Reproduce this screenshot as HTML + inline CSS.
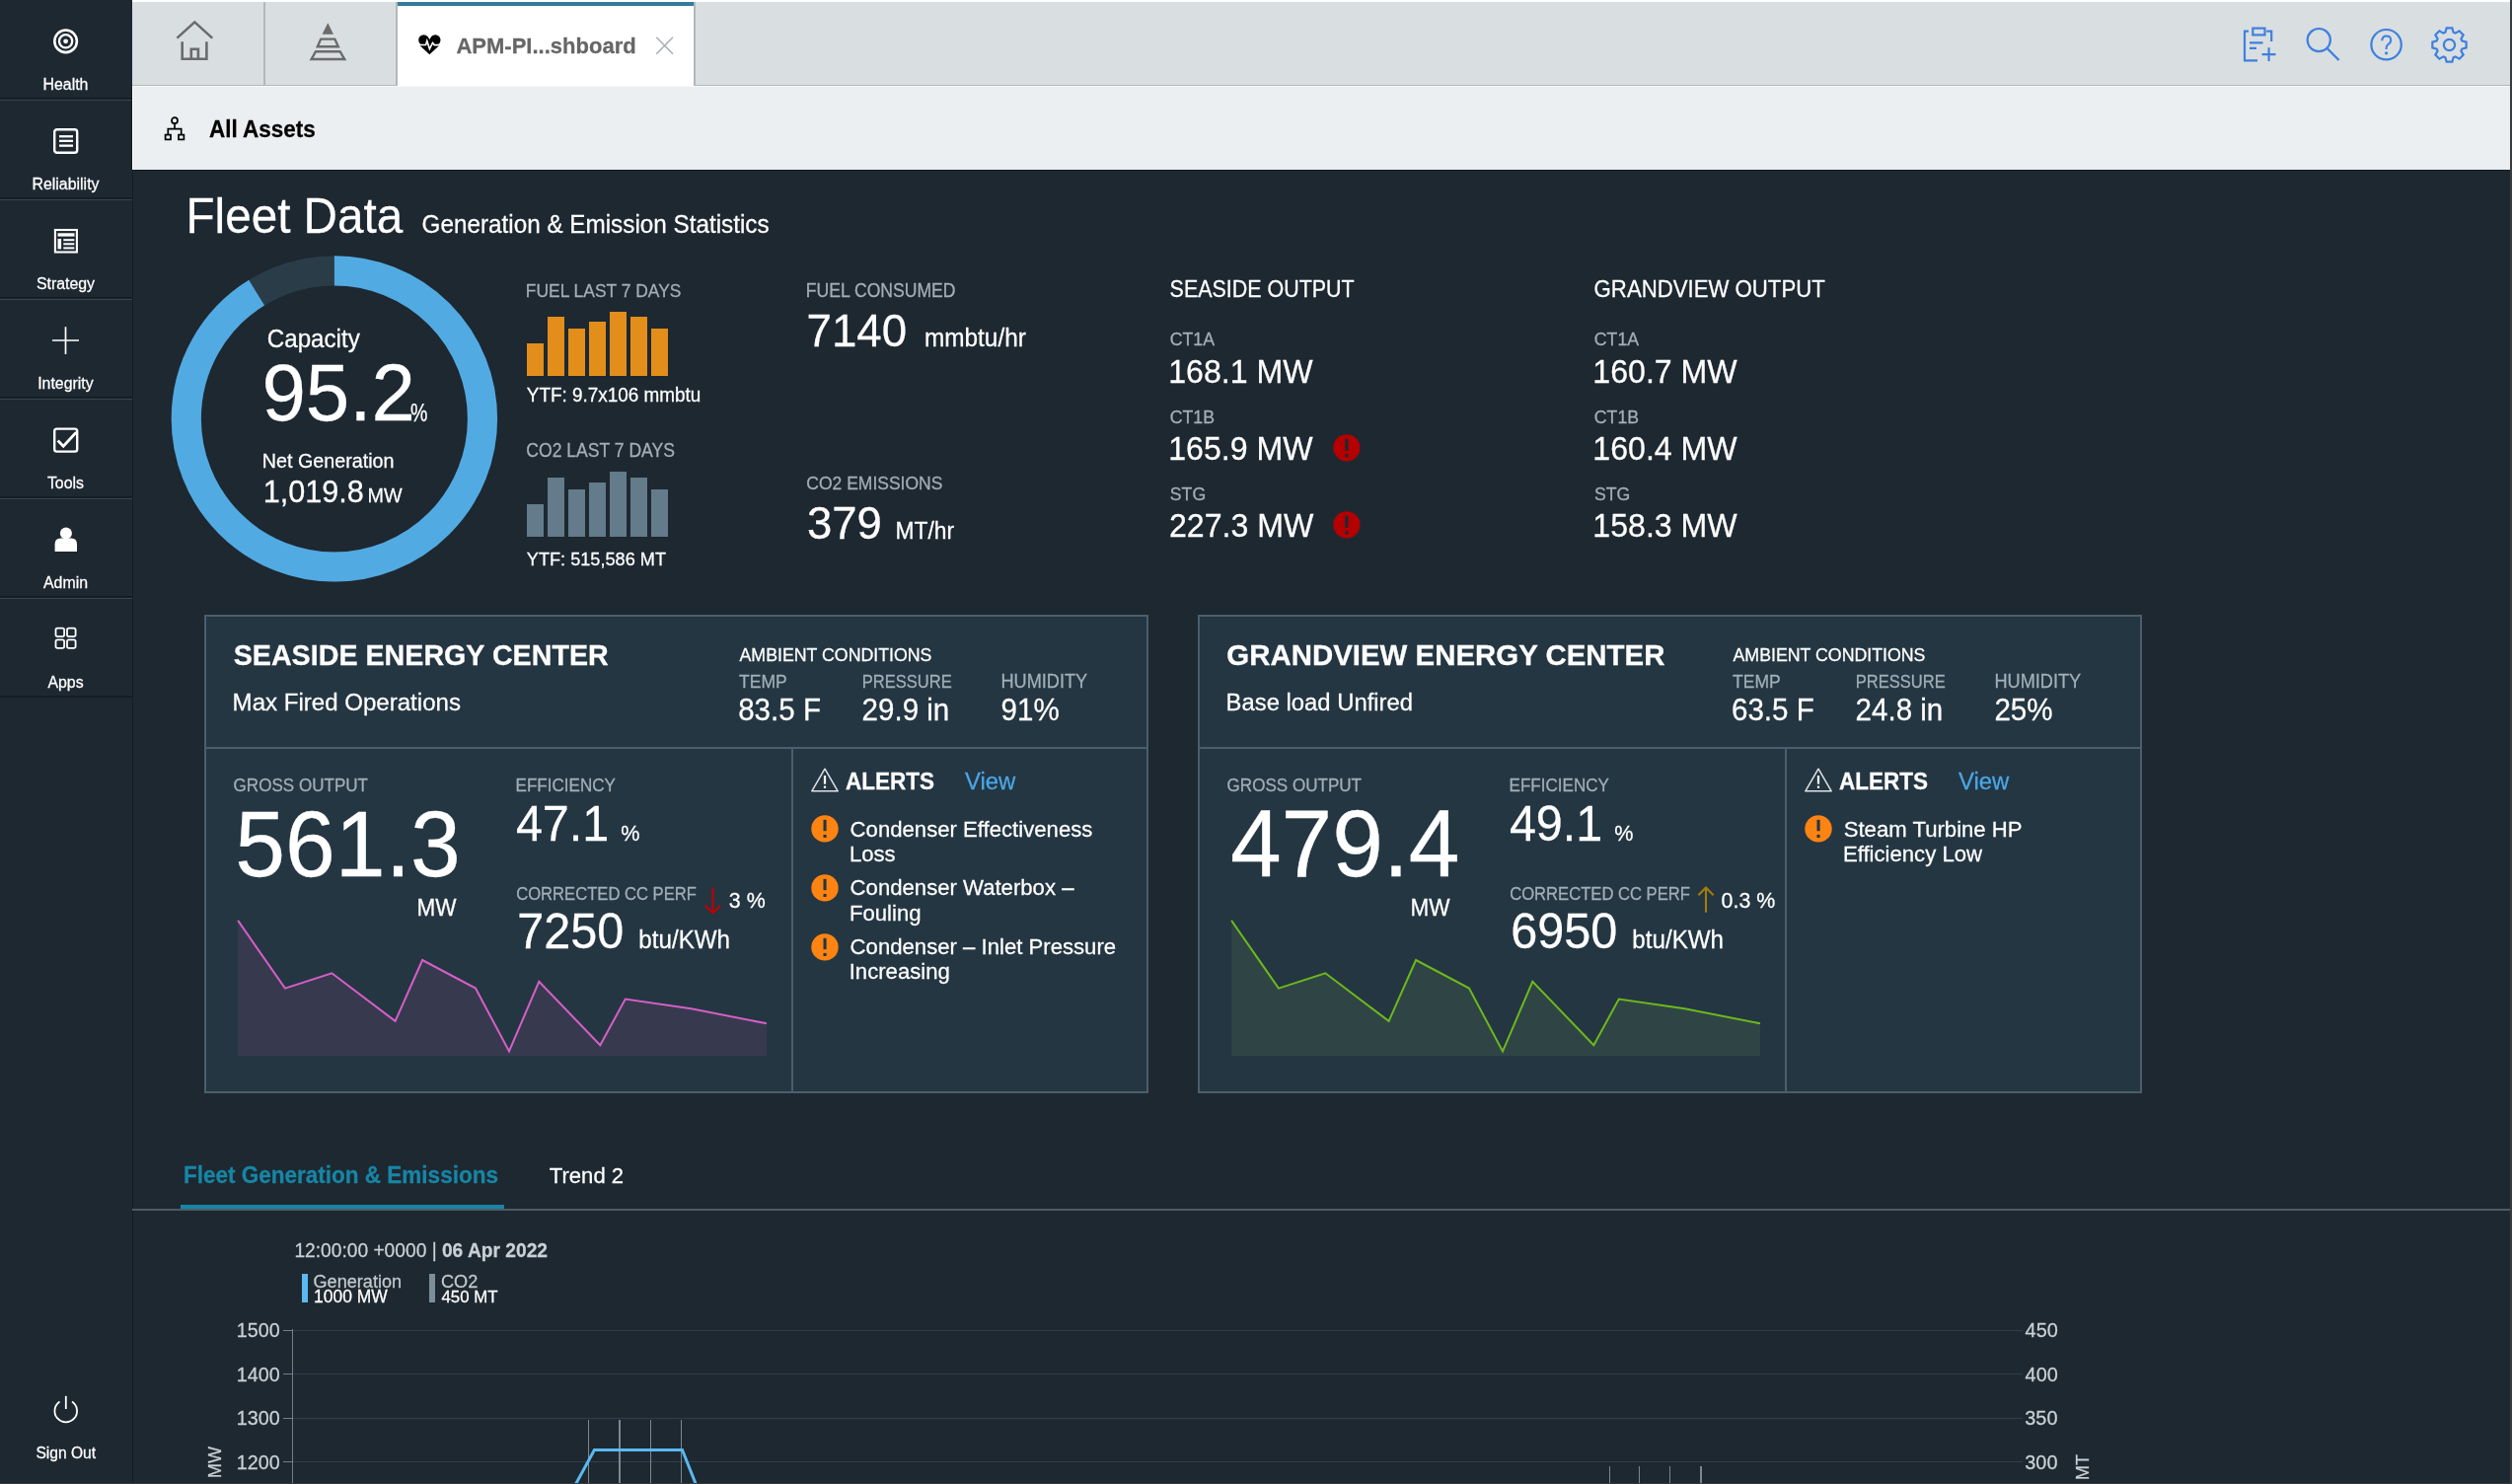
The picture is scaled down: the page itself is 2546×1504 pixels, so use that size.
<!DOCTYPE html>
<html><head><meta charset="utf-8"><title>APM Fleet Dashboard</title>
<style>
html,body{margin:0;padding:0;}
body{width:2546px;height:1504px;overflow:hidden;position:relative;background:#1e2831;font-family:"Liberation Sans",sans-serif;}
.t{position:absolute;white-space:nowrap;line-height:1;-webkit-text-stroke:0.25px currentColor;}
.r{position:absolute;}
.s{position:absolute;overflow:visible;}
b{font-weight:700;}
#root{position:absolute;left:0;top:0;width:2546px;height:1504px;overflow:hidden;will-change:transform;background:#1e2831;}
</style></head><body><div id="root">
<div class="r" style="left:0px;top:0px;width:134px;height:1504px;background:#1e2831;"></div>
<div class="r" style="left:134px;top:0px;width:1px;height:1504px;background:#151d24;"></div>
<div class="r" style="left:0px;top:99px;width:134px;height:1px;background:#141c23;"></div>
<div class="r" style="left:0px;top:100px;width:134px;height:1px;background:#192229;"></div>
<div class="r" style="left:0px;top:101px;width:134px;height:1px;background:#37444e;"></div>
<div class="r" style="left:0px;top:200px;width:134px;height:1px;background:#141c23;"></div>
<div class="r" style="left:0px;top:201px;width:134px;height:1px;background:#192229;"></div>
<div class="r" style="left:0px;top:202px;width:134px;height:1px;background:#37444e;"></div>
<div class="r" style="left:0px;top:301px;width:134px;height:1px;background:#141c23;"></div>
<div class="r" style="left:0px;top:302px;width:134px;height:1px;background:#192229;"></div>
<div class="r" style="left:0px;top:303px;width:134px;height:1px;background:#37444e;"></div>
<div class="r" style="left:0px;top:402px;width:134px;height:1px;background:#141c23;"></div>
<div class="r" style="left:0px;top:403px;width:134px;height:1px;background:#192229;"></div>
<div class="r" style="left:0px;top:404px;width:134px;height:1px;background:#37444e;"></div>
<div class="r" style="left:0px;top:503px;width:134px;height:1px;background:#141c23;"></div>
<div class="r" style="left:0px;top:504px;width:134px;height:1px;background:#192229;"></div>
<div class="r" style="left:0px;top:505px;width:134px;height:1px;background:#37444e;"></div>
<div class="r" style="left:0px;top:604px;width:134px;height:1px;background:#141c23;"></div>
<div class="r" style="left:0px;top:605px;width:134px;height:1px;background:#192229;"></div>
<div class="r" style="left:0px;top:606px;width:134px;height:1px;background:#37444e;"></div>
<div class="r" style="left:0px;top:705px;width:134px;height:1px;background:#141c23;"></div>
<div class="r" style="left:0px;top:706px;width:134px;height:1px;background:#161e25;"></div>
<div class="t" style="left:43.5px;top:78.34px;font-size:15.90px;color:#ffffff;transform:scale(1.0,1.03);transform-origin:0 13.46px;">Health</div>
<div class="t" style="left:32.5px;top:179.34px;font-size:15.90px;color:#ffffff;transform:scale(1.0,1.03);transform-origin:0 13.46px;">Reliability</div>
<div class="t" style="left:36.9px;top:280.34px;font-size:15.90px;color:#ffffff;transform:scale(1.0,1.03);transform-origin:0 13.46px;">Strategy</div>
<div class="t" style="left:38.2px;top:381.34px;font-size:15.90px;color:#ffffff;transform:scale(1.0,1.03);transform-origin:0 13.46px;">Integrity</div>
<div class="t" style="left:47.9px;top:482.34px;font-size:15.90px;color:#ffffff;transform:scale(1.0,1.03);transform-origin:0 13.46px;">Tools</div>
<div class="t" style="left:44.0px;top:583.34px;font-size:15.90px;color:#ffffff;transform:scale(1.0,1.03);transform-origin:0 13.46px;">Admin</div>
<div class="t" style="left:48.4px;top:684.34px;font-size:15.90px;color:#ffffff;transform:scale(1.0,1.03);transform-origin:0 13.46px;">Apps</div>
<svg class="s" style="left:50px;top:25px" width="34" height="34" viewBox="0 0 34 34"><circle cx="16.6" cy="16.8" r="11.3" fill="none" stroke="#fff" stroke-width="2.6"/><circle cx="16.6" cy="16.8" r="6.6" fill="none" stroke="#fff" stroke-width="2.3"/><circle cx="16.6" cy="16.8" r="2.4" fill="#fff"/></svg>
<svg class="s" style="left:50px;top:126.30000000000001px" width="34" height="34" viewBox="0 0 34 34"><rect x="5.2" y="5.2" width="23" height="23.6" rx="2.6" fill="none" stroke="#fff" stroke-width="2.4"/><rect x="10" y="11.1" width="14" height="2.3" fill="#fff"/><rect x="10" y="15.7" width="14" height="2.3" fill="#fff"/><rect x="10" y="20.5" width="14" height="2.3" fill="#fff"/></svg>
<svg class="s" style="left:50px;top:227.6px" width="34" height="34" viewBox="0 0 34 34"><rect x="5.9" y="5.0" width="22" height="22.5" fill="none" stroke="#fff" stroke-width="2.1"/><rect x="8.5" y="8.3" width="17" height="3.3" fill="#fff"/><rect x="8.5" y="14.0" width="3.6" height="10.4" fill="#fff"/><rect x="14.3" y="14.2" width="11" height="2" fill="#fff"/><rect x="14.3" y="18.3" width="11" height="2" fill="#fff"/><rect x="14.3" y="22.4" width="11" height="2" fill="#fff"/></svg>
<svg class="s" style="left:50px;top:328px" width="34" height="34" viewBox="0 0 34 34"><path d="M3 17 H30 M16.5 3.2 V31" stroke="#fff" stroke-width="1.7" fill="none"/></svg>
<svg class="s" style="left:50px;top:429px" width="34" height="34" viewBox="0 0 34 34"><rect x="5.2" y="5.6" width="23" height="23" rx="2.4" fill="none" stroke="#fff" stroke-width="2.4"/><path d="M8.6 17.6 L14.2 23.3 L27.2 9.3" stroke="#fff" stroke-width="2.8" fill="none"/></svg>
<svg class="s" style="left:50px;top:529px" width="34" height="34" viewBox="0 0 34 34"><circle cx="16.9" cy="11.5" r="6" fill="#fff"/><path d="M5.6 30 V22.5 Q5.6 16.5 11.5 16.5 H22.3 Q28 16.5 28 22.5 V30 Z" fill="#fff"/></svg>
<svg class="s" style="left:50px;top:631px" width="34" height="34" viewBox="0 0 34 34"><rect x="6.5" y="5.7" width="8.6" height="8.4" rx="1.8" fill="none" stroke="#fff" stroke-width="1.8"/><rect x="18" y="5.7" width="8.6" height="8.4" rx="1.8" fill="none" stroke="#fff" stroke-width="1.8"/><rect x="6.5" y="17.4" width="8.6" height="8.4" rx="1.8" fill="none" stroke="#fff" stroke-width="1.8"/><rect x="18" y="17.4" width="8.6" height="8.4" rx="1.8" fill="none" stroke="#fff" stroke-width="1.8"/></svg>
<svg class="s" style="left:50px;top:1412px" width="34" height="34" viewBox="0 0 34 34"><path d="M10.5 8.6 A11.3 11.3 0 1 0 23 8.6" stroke="#fff" stroke-width="1.8" fill="none"/><path d="M16.8 2.8 V16" stroke="#fff" stroke-width="1.8" fill="none"/></svg>
<div class="t" style="left:36.4px;top:1464.59px;font-size:15.60px;color:#ffffff;transform:scale(1.0,1.03);transform-origin:0 13.21px;">Sign Out</div>
<div class="r" style="left:134px;top:0px;width:2412px;height:2px;background:#ffffff;"></div>
<div class="r" style="left:134px;top:2px;width:2410px;height:84px;background:#d9dee1;"></div>
<div class="r" style="left:134px;top:86px;width:2410px;height:1px;background:#b6b5ba;"></div>
<div class="r" style="left:267px;top:2px;width:2px;height:84px;background:#b2b7ba;"></div>
<div class="r" style="left:401px;top:2px;width:2px;height:84px;background:#b2b7ba;"></div>
<div class="r" style="left:403px;top:2px;width:300px;height:86px;background:#ffffff;"></div>
<div class="r" style="left:403px;top:2px;width:300px;height:4px;background:#337b9a;"></div>
<div class="r" style="left:703px;top:2px;width:2px;height:84px;background:#b2b7ba;"></div>
<svg class="s" style="left:176px;top:18px;" width="44" height="46" viewBox="0 0 44 46"><path d="M3.4 20.6 L21.3 4.4 L39.2 20.6" stroke="#6b6b6b" stroke-width="2.6" fill="none"/><path d="M8.7 24.2 V41.8 H33.4 V24.2" stroke="#6b6b6b" stroke-width="2.6" fill="none"/><path d="M17.8 41.8 V31.8 H24.9 V41.8" stroke="#6b6b6b" stroke-width="2.6" fill="none"/></svg>
<svg class="s" style="left:313px;top:20px;" width="44" height="44" viewBox="0 0 44 44"><path d="M19.3 3.2 L25 14.8 H13.6 Z" fill="#6b6b6b"/><path d="M12.2 19.6 H26.4 L29.8 27.2 H8.8 Z" stroke="#6b6b6b" stroke-width="2.4" fill="none"/><path d="M7 32.2 H31.6 L36.2 40 H2.6 Z" stroke="#6b6b6b" stroke-width="2.4" fill="none"/></svg>
<svg class="s" style="left:422px;top:33px;" width="28" height="26" viewBox="0 0 28 26"><circle cx="7.5" cy="7.5" r="5.3" fill="#000"/><circle cx="19.2" cy="7.5" r="5.3" fill="#000"/><path d="M9 3.2 L13.35 6.8 L17.7 3.2 L18 12.8 L9 12.8 Z" fill="#000"/><path d="M2.6 12.2 H24.1 L13.35 22.2 Z" fill="#000"/><path d="M1 12.5 H9.6 L10.8 8.5 L13.4 16.6 L16.5 10.4 L18.3 12.6 H26" stroke="#fff" stroke-width="1.6" fill="none" stroke-linejoin="miter"/></svg>
<div class="t" style="left:462.4px;top:35.85px;font-size:22.02px;color:#666666;font-weight:700;transform:scale(1.0,1.03);transform-origin:0 18.65px;">APM-PI...shboard</div>
<svg class="s" style="left:662px;top:35px;" width="24" height="24" viewBox="0 0 24 24"><path d="M3.3 2.8 L20 19.8 M20 2.8 L3.3 19.8" stroke="#a9b0b3" stroke-width="1.6" fill="none"/></svg>
<svg class="s" style="left:2270px;top:24px;" width="42" height="42" viewBox="0 0 42 42"><path d="M9 7.6 H5 V37.4 H18" stroke="#3f80de" stroke-width="2.2" fill="none"/><rect x="13.3" y="4.6" width="12.2" height="6.8" stroke="#3f80de" stroke-width="2.2" fill="none"/><path d="M27.2 7.6 H32.2 V18" stroke="#3f80de" stroke-width="2.2" fill="none"/><path d="M10 19.3 H23.5 M10 24.8 H17" stroke="#3f80de" stroke-width="2.2" fill="none"/><path d="M29.6 24.2 V38 M22.6 31.1 H36.5" stroke="#3f80de" stroke-width="2.2" fill="none"/></svg>
<svg class="s" style="left:2334px;top:24px;" width="42" height="42" viewBox="0 0 42 42"><circle cx="16.3" cy="16.6" r="11.6" stroke="#3f80de" stroke-width="2.2" fill="none"/><path d="M24.6 25 L36.6 37" stroke="#3f80de" stroke-width="2.4" fill="none"/></svg>
<svg class="s" style="left:2398px;top:24px;" width="42" height="42" viewBox="0 0 42 42"><circle cx="20.6" cy="21.2" r="15.2" stroke="#3f80de" stroke-width="2.2" fill="none"/><path d="M16.3 17.2 Q16.3 12.4 20.8 12.4 Q25.2 12.4 25.2 16.6 Q25.2 19.4 22.6 20.8 Q20.6 22 20.6 24.8 V26" stroke="#3f80de" stroke-width="2" fill="none"/><circle cx="20.6" cy="29.8" r="1.6" fill="#3f80de"/></svg>
<svg class="s" style="left:2461px;top:24px;" width="43" height="43" viewBox="0 0 43 43"><path d="M17.41 8.74 L18.64 4.34 L24.36 4.34 L25.59 8.74 L27.63 9.59 L31.62 7.34 L35.66 11.38 L33.41 15.37 L34.26 17.41 L38.66 18.64 L38.66 24.36 L34.26 25.59 L33.41 27.63 L35.66 31.62 L31.62 35.66 L27.63 33.41 L25.59 34.26 L24.36 38.66 L18.64 38.66 L17.41 34.26 L15.37 33.41 L11.38 35.66 L7.34 31.62 L9.59 27.63 L8.74 25.59 L4.34 24.36 L4.34 18.64 L8.74 17.41 L9.59 15.37 L7.34 11.38 L11.38 7.34 L15.37 9.59 Z" stroke="#3f80de" stroke-width="2.2" fill="none" stroke-linejoin="miter"/><circle cx="21.5" cy="21.5" r="5.6" stroke="#3f80de" stroke-width="2.2" fill="none"/></svg>
<div class="r" style="left:134px;top:87px;width:2410px;height:85px;background:#eceff1;"></div>
<div class="r" style="left:134px;top:87px;width:2410px;height:1px;background:#f6f8f9;"></div>
<div class="r" style="left:133px;top:87px;width:1px;height:85px;background:#131b22;"></div>
<div class="r" style="left:134px;top:87px;width:1px;height:85px;background:#ffffff;"></div>
<div class="r" style="left:134px;top:172px;width:2410px;height:1px;background:#151d24;"></div>
<svg class="s" style="left:164px;top:116px;" width="28" height="30" viewBox="0 0 28 30"><circle cx="13" cy="6.2" r="3" stroke="#000" stroke-width="1.7" fill="none"/><path d="M13 9.2 V14.6 M6.3 20.5 V14.6 H19.7 V20.5" stroke="#000" stroke-width="1.7" fill="none"/><rect x="3.6" y="20.6" width="5.4" height="4.8" stroke="#000" stroke-width="1.7" fill="none"/><rect x="17" y="20.6" width="5.4" height="4.8" stroke="#000" stroke-width="1.7" fill="none"/></svg>
<div class="t" style="left:211.9px;top:121.16px;font-size:22.49px;color:#000000;font-weight:700;transform:scale(1.0,1.03);transform-origin:0 19.04px;">All Assets</div>
<div class="r" style="left:2544px;top:0px;width:2px;height:1504px;background:#3a3d40;"></div>
<div class="t" style="left:188.5px;top:196.27px;font-size:47.63px;color:#ffffff;transform:scale(1.0,1.03);transform-origin:0 40.33px;">Fleet Data</div>
<div class="t" style="left:427.6px;top:216.05px;font-size:24.27px;color:#ffffff;transform:scale(1.0,1.03);transform-origin:0 20.55px;">Generation &amp; Emission Statistics</div>
<svg class="s" style="left:160px;top:246px;" width="360" height="360" viewBox="0 0 360 360"><circle cx="178.89999999999998" cy="178.39999999999998" r="150.1" fill="none" stroke="#2b3c49" stroke-width="30.2"/><circle cx="178.89999999999998" cy="178.39999999999998" r="150.1" fill="none" stroke="#52aae3" stroke-width="30.2" stroke-dasharray="859.80 83.31" transform="rotate(-90 178.89999999999998 178.39999999999998)"/></svg>
<div class="t" style="left:270.8px;top:331.54px;font-size:24.17px;color:#ffffff;transform:scale(1.0,1.03);transform-origin:0 20.46px;">Capacity</div>
<div class="t" style="left:265.4px;top:359.36px;font-size:79.89px;color:#ffffff;transform:scale(1.0,1.03);transform-origin:0 67.64px;">95.2</div>
<div class="t" style="left:416.1px;top:405.83px;font-size:25.00px;color:#ffffff;transform:scaleX(0.78);transform-origin:0 0;">%</div>
<div class="t" style="left:265.7px;top:457.89px;font-size:19.74px;color:#ffffff;transform:scale(1.0,1.03);transform-origin:0 16.71px;">Net Generation</div>
<div class="t" style="left:266.7px;top:483.07px;font-size:30.62px;color:#ffffff;transform:scale(1.0,1.03);transform-origin:0 25.93px;">1,019.8</div>
<div class="t" style="left:372.6px;top:493.27px;font-size:19.76px;color:#ffffff;transform:scale(1.0,1.03);transform-origin:0 16.73px;">MW</div>
<div class="t" style="left:532.8px;top:286.54px;font-size:17.44px;color:#a3afb7;transform:scale(1.0,1.1);transform-origin:0 14.76px;">FUEL LAST 7 DAYS</div>
<div class="r" style="left:534.2px;top:348.4px;width:16.7px;height:32.4px;background:#e38e1b;"></div>
<div class="r" style="left:534.2px;top:510.7px;width:16.7px;height:33.1px;background:#637b8a;"></div>
<div class="r" style="left:555.2px;top:321.2px;width:16.7px;height:59.6px;background:#e38e1b;"></div>
<div class="r" style="left:555.2px;top:483.6px;width:16.7px;height:60.2px;background:#637b8a;"></div>
<div class="r" style="left:576.1px;top:332.7px;width:16.7px;height:48.1px;background:#e38e1b;"></div>
<div class="r" style="left:576.1px;top:495.7px;width:16.7px;height:48.1px;background:#637b8a;"></div>
<div class="r" style="left:597.1px;top:326.4px;width:16.7px;height:54.4px;background:#e38e1b;"></div>
<div class="r" style="left:597.1px;top:488.8px;width:16.7px;height:55.0px;background:#637b8a;"></div>
<div class="r" style="left:618.0px;top:315.6px;width:16.7px;height:65.2px;background:#e38e1b;"></div>
<div class="r" style="left:618.0px;top:477.9px;width:16.7px;height:65.9px;background:#637b8a;"></div>
<div class="r" style="left:639.0px;top:321.2px;width:16.7px;height:59.6px;background:#e38e1b;"></div>
<div class="r" style="left:639.0px;top:483.6px;width:16.7px;height:60.2px;background:#637b8a;"></div>
<div class="r" style="left:659.9px;top:332.7px;width:16.7px;height:48.1px;background:#e38e1b;"></div>
<div class="r" style="left:659.9px;top:495.7px;width:16.7px;height:48.1px;background:#637b8a;"></div>
<div class="t" style="left:533.8px;top:391.88px;font-size:18.92px;color:#ffffff;transform:scale(1.0,1.03);transform-origin:0 16.02px;">YTF: 9.7x106 mmbtu</div>
<div class="t" style="left:533.3px;top:448.83px;font-size:17.57px;color:#a3afb7;transform:scale(1.0,1.1);transform-origin:0 14.87px;">CO2 LAST 7 DAYS</div>
<div class="t" style="left:533.8px;top:558.22px;font-size:18.17px;color:#ffffff;transform:scale(1.0,1.03);transform-origin:0 15.38px;">YTF: 515,586 MT</div>
<div class="t" style="left:816.8px;top:287.40px;font-size:17.59px;color:#a3afb7;transform:scale(1.0,1.1);transform-origin:0 14.90px;">FUEL CONSUMED</div>
<div class="t" style="left:817.5px;top:312.63px;font-size:45.67px;color:#ffffff;transform:scale(1.0,1.03);transform-origin:0 38.67px;">7140</div>
<div class="t" style="left:936.9px;top:330.66px;font-size:24.38px;color:#ffffff;transform:scale(1.0,1.03);transform-origin:0 20.64px;">mmbtu/hr</div>
<div class="t" style="left:817.3px;top:481.58px;font-size:17.51px;color:#a3afb7;transform:scale(1.0,1.1);transform-origin:0 14.82px;">CO2 EMISSIONS</div>
<div class="t" style="left:818.1px;top:507.54px;font-size:45.43px;color:#ffffff;transform:scale(1.0,1.03);transform-origin:0 38.46px;">379</div>
<div class="t" style="left:907.4px;top:526.61px;font-size:22.90px;color:#ffffff;transform:scale(1.0,1.03);transform-origin:0 19.39px;">MT/hr</div>
<div class="t" style="left:1185.6px;top:284.14px;font-size:21.45px;color:#ffffff;transform:scale(1.0,1.1);transform-origin:0 18.16px;">SEASIDE OUTPUT</div>
<div class="t" style="left:1185.7px;top:336.49px;font-size:17.72px;color:#a3afb7;transform:scale(1.0,1.03);transform-origin:0 15.01px;">CT1A</div>
<div class="t" style="left:1184.2px;top:361.38px;font-size:32.14px;color:#ffffff;transform:scale(1.0,1.03);transform-origin:0 27.22px;">168.1 MW</div>
<div class="t" style="left:1185.7px;top:414.69px;font-size:17.72px;color:#a3afb7;transform:scale(1.0,1.03);transform-origin:0 15.01px;">CT1B</div>
<div class="t" style="left:1184.2px;top:438.58px;font-size:32.14px;color:#ffffff;transform:scale(1.0,1.03);transform-origin:0 27.22px;">165.9 MW</div>
<svg class="s" style="left:1350.8px;top:439.8px;" width="28" height="28" viewBox="0 0 28 28"><circle cx="13.9" cy="13.8" r="13.6" fill="#b40000"/><rect x="12.3" y="4.6" width="3.2" height="12.2" fill="#1e2831"/><rect x="12.3" y="20.1" width="3.2" height="3.3" fill="#1e2831"/></svg>
<div class="t" style="left:1185.8px;top:492.89px;font-size:17.72px;color:#a3afb7;transform:scale(1.0,1.03);transform-origin:0 15.01px;">STG</div>
<div class="t" style="left:1185.0px;top:516.78px;font-size:32.14px;color:#ffffff;transform:scale(1.0,1.03);transform-origin:0 27.22px;">227.3 MW</div>
<svg class="s" style="left:1350.8px;top:518px;" width="28" height="28" viewBox="0 0 28 28"><circle cx="13.9" cy="13.8" r="13.6" fill="#b40000"/><rect x="12.3" y="4.6" width="3.2" height="12.2" fill="#1e2831"/><rect x="12.3" y="20.1" width="3.2" height="3.3" fill="#1e2831"/></svg>
<div class="t" style="left:1615.6px;top:282.51px;font-size:22.19px;color:#ffffff;transform:scale(1.0,1.1);transform-origin:0 18.79px;">GRANDVIEW OUTPUT</div>
<div class="t" style="left:1615.8px;top:336.49px;font-size:17.72px;color:#a3afb7;transform:scale(1.0,1.03);transform-origin:0 15.01px;">CT1A</div>
<div class="t" style="left:1614.3px;top:361.38px;font-size:32.14px;color:#ffffff;transform:scale(1.0,1.03);transform-origin:0 27.22px;">160.7 MW</div>
<div class="t" style="left:1615.8px;top:414.69px;font-size:17.72px;color:#a3afb7;transform:scale(1.0,1.03);transform-origin:0 15.01px;">CT1B</div>
<div class="t" style="left:1614.3px;top:438.58px;font-size:32.14px;color:#ffffff;transform:scale(1.0,1.03);transform-origin:0 27.22px;">160.4 MW</div>
<div class="t" style="left:1615.9px;top:492.89px;font-size:17.72px;color:#a3afb7;transform:scale(1.0,1.03);transform-origin:0 15.01px;">STG</div>
<div class="t" style="left:1614.3px;top:516.78px;font-size:32.14px;color:#ffffff;transform:scale(1.0,1.03);transform-origin:0 27.22px;">158.3 MW</div>
<div class="r" style="left:207px;top:623px;width:957px;height:485px;background:#243642;box-sizing:border-box;border:2px solid #4b5e6b;"></div>
<div class="r" style="left:207px;top:757px;width:957px;height:2px;background:#4b5e6b;"></div>
<div class="r" style="left:802px;top:758px;width:2px;height:350px;background:#4b5e6b;"></div>
<div class="t" style="left:236.7px;top:650.33px;font-size:28.66px;color:#ffffff;font-weight:700;transform:scale(1.0,1.03);transform-origin:0 24.27px;">SEASIDE ENERGY CENTER</div>
<div class="t" style="left:235.6px;top:699.62px;font-size:24.07px;color:#ffffff;transform:scale(1.0,1.03);transform-origin:0 20.38px;">Max Fired Operations</div>
<div class="t" style="left:749.5px;top:655.56px;font-size:17.76px;color:#ffffff;transform:scale(1.0,1.06);transform-origin:0 15.04px;">AMBIENT CONDITIONS</div>
<div class="t" style="left:749.1px;top:683.06px;font-size:17.52px;color:#a3afb7;transform:scale(1.0,1.1);transform-origin:0 14.84px;">TEMP</div>
<div class="t" style="left:748.2px;top:705.48px;font-size:29.55px;color:#ffffff;transform:scale(1.0,1.03);transform-origin:0 25.02px;">83.5 F</div>
<div class="t" style="left:873.8px;top:683.89px;font-size:16.54px;color:#a3afb7;transform:scale(1.0,1.1);transform-origin:0 14.01px;">PRESSURE</div>
<div class="t" style="left:873.6px;top:705.48px;font-size:29.55px;color:#ffffff;transform:scale(1.0,1.03);transform-origin:0 25.02px;">29.9 in</div>
<div class="t" style="left:1014.4px;top:681.51px;font-size:18.18px;color:#a3afb7;transform:scale(1.0,1.1);transform-origin:0 15.39px;">HUMIDITY</div>
<div class="t" style="left:1014.6px;top:705.48px;font-size:29.55px;color:#ffffff;transform:scale(1.0,1.03);transform-origin:0 25.02px;">91%</div>
<div class="t" style="left:236.6px;top:788.05px;font-size:17.06px;color:#a3afb7;transform:scale(1.0,1.1);transform-origin:0 14.45px;">GROSS OUTPUT</div>
<div class="t" style="left:238.3px;top:811.18px;font-size:91.32px;color:#ffffff;transform:scale(1.0,1.03);transform-origin:0 77.32px;">561.3</div>
<div class="t" style="right:2083.5px;top:909.52px;font-size:22.54px;color:#ffffff;transform:scale(1.0,1.03);transform-origin:100% 19.08px;">MW</div>
<div class="t" style="left:522.6px;top:788.07px;font-size:17.05px;color:#a3afb7;transform:scale(1.0,1.1);transform-origin:0 14.43px;">EFFICIENCY</div>
<div class="t" style="left:522.9px;top:811.21px;font-size:48.53px;color:#ffffff;transform:scale(1.0,1.03);transform-origin:0 41.09px;">47.1</div>
<div class="t" style="left:629.2px;top:834.02px;font-size:21.59px;color:#ffffff;transform:scale(1.0,1.03);transform-origin:0 18.28px;">%</div>
<div class="t" style="left:523.2px;top:899.43px;font-size:16.62px;color:#a3afb7;transform:scale(1.0,1.15);transform-origin:0 14.07px;">CORRECTED CC PERF</div>
<svg class="s" style="left:713px;top:896px;" width="20" height="32" viewBox="0 0 20 32"><path d="M9.4 3.6 V29.2 M1.6 21.8 L9.4 29.4 L17.2 21.8" stroke="#c00000" stroke-width="2.1" fill="none"/></svg>
<div class="t" style="left:738.8px;top:902.66px;font-size:21.42px;color:#ffffff;transform:scale(1.0,1.03);transform-origin:0 18.14px;">3 %</div>
<div class="t" style="left:524.2px;top:919.87px;font-size:48.57px;color:#ffffff;transform:scale(1.0,1.03);transform-origin:0 41.13px;">7250</div>
<div class="t" style="left:647.3px;top:940.51px;font-size:24.20px;color:#ffffff;transform:scale(1.0,1.03);transform-origin:0 20.49px;">btu/KWh</div>
<svg class="s" style="left:238px;top:920px;" width="545" height="160" viewBox="0 0 545 160"><polygon points="3.1,150.3 3.1,12.9 50.9,81.6 98.3,66.3 162.6,114.9 190.1,53.0 244.0,81.6 278.0,145.5 308.3,74.8 370.3,139.2 395.8,92.5 462.5,102.3 539.0,117.3 539.0,150.3" fill="#373a4f"/><polyline points="3.1,12.9 50.9,81.6 98.3,66.3 162.6,114.9 190.1,53.0 244.0,81.6 278.0,145.5 308.3,74.8 370.3,139.2 395.8,92.5 462.5,102.3 539.0,117.3" fill="none" stroke="#d65fc6" stroke-width="2"/></svg>
<svg class="s" style="left:821px;top:776px;" width="32" height="30" viewBox="0 0 32 30"><path d="M15 3.2 L28.2 25.8 H1.8 Z" stroke="#dfe3e6" stroke-width="1.5" fill="none" stroke-linejoin="round"/><path d="M15 10 V18.6" stroke="#fff" stroke-width="2.2"/><rect x="13.9" y="20.6" width="2.2" height="2.2" fill="#fff"/></svg>
<div class="t" style="left:857.0px;top:781.93px;font-size:22.53px;color:#ffffff;font-weight:700;transform:scale(1.0,1.1);transform-origin:0 19.07px;">ALERTS</div>
<div class="t" style="left:977.9px;top:779.76px;font-size:23.91px;color:#4aa7e6;transform:scale(1.0,1.03);transform-origin:0 20.24px;">View</div>
<svg class="s" style="left:822.1px;top:826px;" width="28" height="28" viewBox="0 0 28 28"><circle cx="14" cy="13.9" r="13.7" fill="#fd8412"/><rect x="12.5" y="4.8" width="3.1" height="11.4" fill="#243642"/><rect x="12.5" y="19.9" width="3.1" height="3.1" fill="#243642"/></svg>
<div class="t" style="left:861.6px;top:829.84px;font-size:22.15px;color:#ffffff;transform:scale(1.0,1.03);transform-origin:0 18.76px;">Condenser Effectiveness</div>
<div class="t" style="left:860.9px;top:855.04px;font-size:22.15px;color:#ffffff;transform:scale(1.0,1.03);transform-origin:0 18.76px;">Loss</div>
<svg class="s" style="left:822.1px;top:885.5px;" width="28" height="28" viewBox="0 0 28 28"><circle cx="14" cy="13.9" r="13.7" fill="#fd8412"/><rect x="12.5" y="4.8" width="3.1" height="11.4" fill="#243642"/><rect x="12.5" y="19.9" width="3.1" height="3.1" fill="#243642"/></svg>
<div class="t" style="left:861.6px;top:888.64px;font-size:22.15px;color:#ffffff;transform:scale(1.0,1.03);transform-origin:0 18.76px;">Condenser Waterbox –</div>
<div class="t" style="left:860.9px;top:914.84px;font-size:22.15px;color:#ffffff;transform:scale(1.0,1.03);transform-origin:0 18.76px;">Fouling</div>
<svg class="s" style="left:822.1px;top:945.7px;" width="28" height="28" viewBox="0 0 28 28"><circle cx="14" cy="13.9" r="13.7" fill="#fd8412"/><rect x="12.5" y="4.8" width="3.1" height="11.4" fill="#243642"/><rect x="12.5" y="19.9" width="3.1" height="3.1" fill="#243642"/></svg>
<div class="t" style="left:861.6px;top:949.14px;font-size:22.15px;color:#ffffff;transform:scale(1.0,1.03);transform-origin:0 18.76px;">Condenser – Inlet Pressure</div>
<div class="t" style="left:860.7px;top:974.34px;font-size:22.15px;color:#ffffff;transform:scale(1.0,1.03);transform-origin:0 18.76px;">Increasing</div>
<div class="r" style="left:1214px;top:623px;width:957px;height:485px;background:#243642;box-sizing:border-box;border:2px solid #4b5e6b;"></div>
<div class="r" style="left:1214px;top:757px;width:957px;height:2px;background:#4b5e6b;"></div>
<div class="r" style="left:1809px;top:758px;width:2px;height:350px;background:#4b5e6b;"></div>
<div class="t" style="left:1243.3px;top:648.68px;font-size:29.43px;color:#ffffff;font-weight:700;transform:scale(1.0,1.03);transform-origin:0 24.92px;">GRANDVIEW ENERGY CENTER</div>
<div class="t" style="left:1242.6px;top:699.82px;font-size:23.83px;color:#ffffff;transform:scale(1.0,1.03);transform-origin:0 20.18px;">Base load Unfired</div>
<div class="t" style="left:1756.5px;top:655.56px;font-size:17.76px;color:#ffffff;transform:scale(1.0,1.06);transform-origin:0 15.04px;">AMBIENT CONDITIONS</div>
<div class="t" style="left:1756.1px;top:683.06px;font-size:17.52px;color:#a3afb7;transform:scale(1.0,1.1);transform-origin:0 14.84px;">TEMP</div>
<div class="t" style="left:1755.0px;top:705.48px;font-size:29.55px;color:#ffffff;transform:scale(1.0,1.03);transform-origin:0 25.02px;">63.5 F</div>
<div class="t" style="left:1880.8px;top:683.89px;font-size:16.54px;color:#a3afb7;transform:scale(1.0,1.1);transform-origin:0 14.01px;">PRESSURE</div>
<div class="t" style="left:1880.6px;top:705.48px;font-size:29.55px;color:#ffffff;transform:scale(1.0,1.03);transform-origin:0 25.02px;">24.8 in</div>
<div class="t" style="left:2021.4px;top:681.51px;font-size:18.18px;color:#a3afb7;transform:scale(1.0,1.1);transform-origin:0 15.39px;">HUMIDITY</div>
<div class="t" style="left:2021.4px;top:705.48px;font-size:29.55px;color:#ffffff;transform:scale(1.0,1.03);transform-origin:0 25.02px;">25%</div>
<div class="t" style="left:1243.6px;top:788.05px;font-size:17.06px;color:#a3afb7;transform:scale(1.0,1.1);transform-origin:0 14.45px;">GROSS OUTPUT</div>
<div class="t" style="left:1246.9px;top:809.79px;font-size:92.97px;color:#ffffff;transform:scale(1.0,1.03);transform-origin:0 78.71px;">479.4</div>
<div class="t" style="right:1076.5px;top:909.52px;font-size:22.54px;color:#ffffff;transform:scale(1.0,1.03);transform-origin:100% 19.08px;">MW</div>
<div class="t" style="left:1529.6px;top:788.07px;font-size:17.05px;color:#a3afb7;transform:scale(1.0,1.1);transform-origin:0 14.43px;">EFFICIENCY</div>
<div class="t" style="left:1529.9px;top:811.21px;font-size:48.53px;color:#ffffff;transform:scale(1.0,1.03);transform-origin:0 41.09px;">49.1</div>
<div class="t" style="left:1636.2px;top:834.02px;font-size:21.59px;color:#ffffff;transform:scale(1.0,1.03);transform-origin:0 18.28px;">%</div>
<div class="t" style="left:1530.2px;top:899.43px;font-size:16.62px;color:#a3afb7;transform:scale(1.0,1.15);transform-origin:0 14.07px;">CORRECTED CC PERF</div>
<svg class="s" style="left:1720px;top:896px;" width="20" height="32" viewBox="0 0 20 32"><path d="M9 28.8 V3.6 M1.4 11.2 L9 3.4 L16.6 11.2" stroke="#a17d0c" stroke-width="2.1" fill="none"/></svg>
<div class="t" style="left:1744.6px;top:902.66px;font-size:21.42px;color:#ffffff;transform:scale(1.0,1.03);transform-origin:0 18.14px;">0.3 %</div>
<div class="t" style="left:1531.2px;top:919.87px;font-size:48.57px;color:#ffffff;transform:scale(1.0,1.03);transform-origin:0 41.13px;">6950</div>
<div class="t" style="left:1654.3px;top:940.51px;font-size:24.20px;color:#ffffff;transform:scale(1.0,1.03);transform-origin:0 20.49px;">btu/KWh</div>
<svg class="s" style="left:238px;top:920px;" width="545" height="160" viewBox="0 0 545 160"><polygon points="1010.1,150.3 1010.1,12.9 1057.9,81.6 1105.3,66.3 1169.6,114.9 1197.1,53.0 1251.0,81.6 1285.0,145.5 1315.3,74.8 1377.3,139.2 1402.8,92.5 1469.5,102.3 1546.0,117.3 1546.0,150.3" fill="#2f4545"/><polyline points="1010.1,12.9 1057.9,81.6 1105.3,66.3 1169.6,114.9 1197.1,53.0 1251.0,81.6 1285.0,145.5 1315.3,74.8 1377.3,139.2 1402.8,92.5 1469.5,102.3 1546.0,117.3" fill="none" stroke="#6db81c" stroke-width="2"/></svg>
<svg class="s" style="left:1828px;top:776px;" width="32" height="30" viewBox="0 0 32 30"><path d="M15 3.2 L28.2 25.8 H1.8 Z" stroke="#dfe3e6" stroke-width="1.5" fill="none" stroke-linejoin="round"/><path d="M15 10 V18.6" stroke="#fff" stroke-width="2.2"/><rect x="13.9" y="20.6" width="2.2" height="2.2" fill="#fff"/></svg>
<div class="t" style="left:1864.0px;top:781.93px;font-size:22.53px;color:#ffffff;font-weight:700;transform:scale(1.0,1.1);transform-origin:0 19.07px;">ALERTS</div>
<div class="t" style="left:1984.9px;top:779.76px;font-size:23.91px;color:#4aa7e6;transform:scale(1.0,1.03);transform-origin:0 20.24px;">View</div>
<svg class="s" style="left:1829.1px;top:826px;" width="28" height="28" viewBox="0 0 28 28"><circle cx="14" cy="13.9" r="13.7" fill="#fd8412"/><rect x="12.5" y="4.8" width="3.1" height="11.4" fill="#243642"/><rect x="12.5" y="19.9" width="3.1" height="3.1" fill="#243642"/></svg>
<div class="t" style="left:1868.7px;top:829.84px;font-size:22.15px;color:#ffffff;transform:scale(1.0,1.03);transform-origin:0 18.76px;">Steam Turbine HP</div>
<div class="t" style="left:1867.9px;top:855.04px;font-size:22.15px;color:#ffffff;transform:scale(1.0,1.03);transform-origin:0 18.76px;">Efficiency Low</div>
<div class="t" style="left:185.9px;top:1180.52px;font-size:22.53px;color:#1786a6;font-weight:700;transform:scale(1.0,1.03);transform-origin:0 19.08px;">Fleet Generation &amp; Emissions</div>
<div class="t" style="left:556.8px;top:1180.89px;font-size:22.10px;color:#ffffff;transform:scale(1.0,1.03);transform-origin:0 18.71px;">Trend 2</div>
<div class="r" style="left:134px;top:1225px;width:2410px;height:2px;background:#4d5b66;"></div>
<div class="r" style="left:183px;top:1221px;width:328px;height:4px;background:#1786a6;"></div>
<div class="t" style="left:298.4px;top:1257.74px;font-size:19.20px;color:#c9d1d6;transform:scale(1.0,1.03);transform-origin:0 16.26px;">12:00:00 +0000 | <b>06 Apr 2022</b></div>
<div class="r" style="left:306px;top:1290.5px;width:6px;height:29px;background:#5ab9f2;"></div>
<div class="r" style="left:435.2px;top:1290.5px;width:6px;height:29px;background:#7b8e9a;"></div>
<div class="t" style="left:317.5px;top:1290.26px;font-size:18.12px;color:#c2cad0;transform:scale(1.0,1.03);transform-origin:0 15.34px;">Generation</div>
<div class="t" style="left:318.0px;top:1306.39px;font-size:17.49px;color:#ffffff;transform:scale(1.0,1.03);transform-origin:0 14.81px;">1000 MW</div>
<div class="t" style="left:447.0px;top:1290.26px;font-size:18.12px;color:#c2cad0;transform:scale(1.0,1.03);transform-origin:0 15.34px;">CO2</div>
<div class="t" style="left:447.5px;top:1306.93px;font-size:16.85px;color:#ffffff;transform:scale(1.0,1.03);transform-origin:0 14.27px;">450 MT</div>
<div class="r" style="left:287px;top:1347.5px;width:1763px;height:1.2px;background:#2f3f4b;"></div>
<div class="r" style="left:287px;top:1347.5px;width:9px;height:1.2px;background:#6f818d;"></div>
<div class="t" style="left:239.7px;top:1338.57px;font-size:19.76px;color:#c9d1d6;transform:scale(1.0,1.03);transform-origin:0 16.73px;">1500</div>
<div class="t" style="left:2052.6px;top:1339.45px;font-size:19.91px;color:#c9d1d6;transform:scale(1.0,1.03);transform-origin:0 16.85px;">450</div>
<div class="r" style="left:287px;top:1392.1px;width:1763px;height:1.2px;background:#2f3f4b;"></div>
<div class="r" style="left:287px;top:1392.1px;width:9px;height:1.2px;background:#6f818d;"></div>
<div class="t" style="left:239.7px;top:1384.17px;font-size:19.76px;color:#c9d1d6;transform:scale(1.0,1.03);transform-origin:0 16.73px;">1400</div>
<div class="t" style="left:2052.6px;top:1384.05px;font-size:19.91px;color:#c9d1d6;transform:scale(1.0,1.03);transform-origin:0 16.85px;">400</div>
<div class="r" style="left:287px;top:1436.7px;width:1763px;height:1.2px;background:#2f3f4b;"></div>
<div class="r" style="left:287px;top:1436.7px;width:9px;height:1.2px;background:#6f818d;"></div>
<div class="t" style="left:239.7px;top:1427.77px;font-size:19.76px;color:#c9d1d6;transform:scale(1.0,1.03);transform-origin:0 16.73px;">1300</div>
<div class="t" style="left:2052.3px;top:1427.65px;font-size:19.91px;color:#c9d1d6;transform:scale(1.0,1.03);transform-origin:0 16.85px;">350</div>
<div class="r" style="left:287px;top:1481.3px;width:1763px;height:1.2px;background:#2f3f4b;"></div>
<div class="r" style="left:287px;top:1481.3px;width:9px;height:1.2px;background:#6f818d;"></div>
<div class="t" style="left:239.7px;top:1473.37px;font-size:19.76px;color:#c9d1d6;transform:scale(1.0,1.03);transform-origin:0 16.73px;">1200</div>
<div class="t" style="left:2052.3px;top:1473.25px;font-size:19.91px;color:#c9d1d6;transform:scale(1.0,1.03);transform-origin:0 16.85px;">300</div>
<div class="r" style="left:296px;top:1347px;width:1.3px;height:157px;background:#6f818d;"></div>
<div class="t" style="left:198px;top:1473px;font-size:18px;color:#c9d1d6;transform:rotate(-90deg);transform-origin:20px 9px;width:40px;text-align:center">MW</div>
<div class="t" style="left:2091px;top:1478px;font-size:18px;color:#c9d1d6;transform:rotate(-90deg);transform-origin:20px 9px;width:40px;text-align:center">MT</div>
<div class="r" style="left:596.2px;top:1439.4px;width:1.3px;height:65px;background:#7a8894;"></div>
<div class="r" style="left:627.4px;top:1439.4px;width:1.3px;height:65px;background:#7a8894;"></div>
<div class="r" style="left:658.6px;top:1439.4px;width:1.3px;height:65px;background:#7a8894;"></div>
<div class="r" style="left:689.8px;top:1439.4px;width:1.3px;height:65px;background:#7a8894;"></div>
<div class="r" style="left:1630.6px;top:1486.4px;width:1.3px;height:18px;background:#7a8894;"></div>
<div class="r" style="left:1661.0px;top:1486.4px;width:1.3px;height:18px;background:#7a8894;"></div>
<div class="r" style="left:1692.2px;top:1486.4px;width:1.3px;height:18px;background:#7a8894;"></div>
<div class="r" style="left:1723.4px;top:1486.4px;width:1.3px;height:18px;background:#7a8894;"></div>
<svg class="s" style="left:560px;top:1460px;" width="160" height="44" viewBox="0 0 160 44"><polyline points="22.5,46 42.4,9.5 131.5,9.5 146,46" fill="none" stroke="#5ab9f2" stroke-width="3"/></svg>
<div class="r" style="left:0px;top:1503px;width:2544px;height:1px;background:#3a3a3e;"></div>
</div></body></html>
